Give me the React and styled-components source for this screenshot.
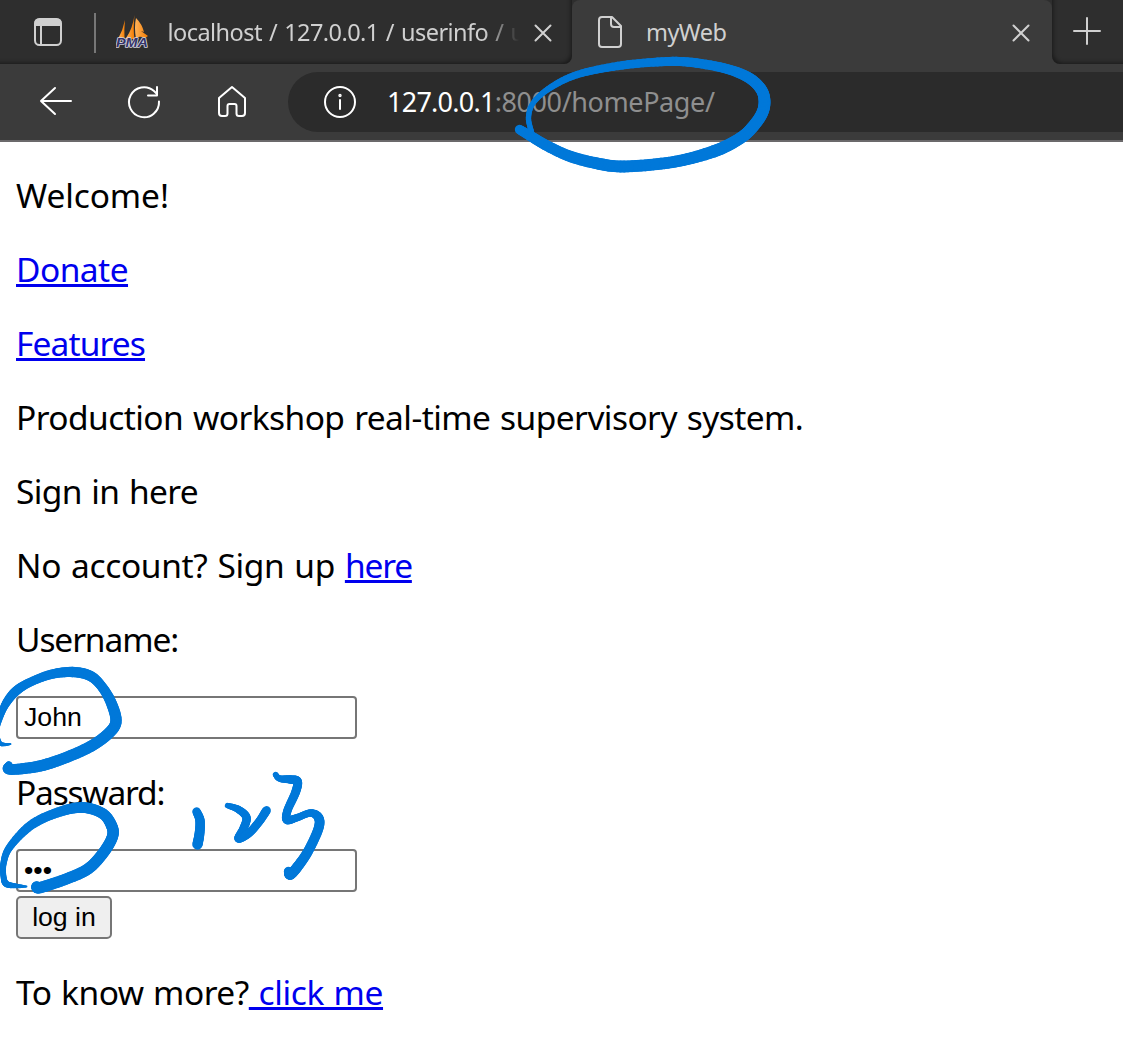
import React from "react";
import styled, { createGlobalStyle } from "styled-components";

const GlobalStyle = createGlobalStyle`
  * { box-sizing: border-box; }
  body { margin: 0; background: #fff; }
`;

const Screen = styled.div`
  position: relative;
  height: 1061px;
  overflow: hidden;
  color: #000;
  font-family: "Noto Sans", "Open Sans", sans-serif;
`;

/* ---------- browser chrome ---------- */
const TabStrip = styled.header`
  display: flex;
  height: 64px;
  background: linear-gradient(#2e2e2e 50%, #3b3b3b 50%);
`;

const InactiveArea = styled.div`
  display: flex;
  align-items: center;
  width: 572px;
  padding-left: 33px;
  background: #2e2e2e;
  border-bottom-right-radius: 8px;
  box-shadow: inset -3px -3px 4px -2px rgba(0, 0, 0, 0.45);
`;

const Divider = styled.span`
  width: 2px;
  height: 40px;
  margin: 1px 20px 0 31px;
  background: #777;
`;

const ActiveTab = styled.div`
  display: flex;
  align-items: center;
  width: 480px;
  padding-left: 25px;
  background: #3b3b3b;
  border-radius: 8px 8px 0 0;
`;

const NewTab = styled.div`
  display: flex;
  flex: 1;
  align-items: center;
  padding: 0 0 2px 21px;
  background: #2e2e2e;
  border-bottom-left-radius: 8px;
  box-shadow: inset 3px -3px 4px -2px rgba(0, 0, 0, 0.45);
`;

const TabTitle = styled.span`
  flex: none;
  width: ${(p) => p.$width}px;
  margin-left: ${(p) => p.$gap}px;
  color: #d0d0d0;
  font-size: 23.5px;
  line-height: 32px;
  letter-spacing: -0.55px;
  word-spacing: 1.5px;
  white-space: nowrap;
  ${(p) => p.$fade && "mask-image: linear-gradient(to right, #000 316px, transparent 351px);"}
`;

const Toolbar = styled.nav`
  display: flex;
  align-items: center;
  height: 78px;
  padding-left: 38px;
  background: #3b3b3b;
  border-bottom: 2px solid #6b696b;
`;

const ToolIcons = styled.div`
  display: flex;
  gap: 52px;
  width: 250px;
`;

const AddressBar = styled.div`
  display: flex;
  flex: 1;
  align-items: center;
  height: 60px;
  padding-left: 34px;
  background: #2b2b2b;
  border-radius: 30px 0 0 30px;
  color: #8f8f8f;
  font-size: 27px;
  line-height: 40px;
  letter-spacing: -0.4px;
`;

const Host = styled.span`
  margin-left: 29px;
  color: #fff;
  letter-spacing: -0.75px;
`;

const Glyph = styled.svg`
  display: block;
  flex: none;
  fill: none;
  stroke: ${(p) => p.$tone || "#fff"};
  stroke-width: 2;
  stroke-linecap: round;
  stroke-linejoin: round;
`;

const CloseGlyph = styled(Glyph)`
  margin: 2px 0 0 ${(p) => p.$gap}px;
`;

const LogoText = styled.text`
  font: italic bold 13.5px "Liberation Sans", sans-serif;
  fill: #34346a;
  stroke: #d5d5df;
  stroke-width: 1.6px;
  paint-order: stroke;
`;

/* ---------- page ---------- */
const Page = styled.main`
  display: flex;
  flex-direction: column;
  gap: 32px;
  padding: 32px 16px;
`;

const Paragraph = styled.p`
  margin: 0;
  font-size: 33.5px;
  line-height: 42px;
  letter-spacing: ${(p) => p.$track || 0}px;
  word-spacing: ${(p) => p.$space || 0}px;
  white-space: pre;
`;

const Link = styled.a`
  color: #0000ee;
  letter-spacing: ${(p) => p.$track}px;
  text-decoration: underline;
  text-decoration-thickness: 3px;
  text-underline-offset: 2px;
`;

const Form = styled.form`
  display: flex;
  flex-direction: column;
  align-items: flex-start;
`;

const Field = styled.input`
  width: 341px;
  height: 43px;
  margin: ${(p) => p.$above}px 0 ${(p) => p.$below}px;
  padding: 0 6px 1px;
  border: 2px solid #767676;
  border-radius: 4px;
  background: #fff;
  color: #000;
  outline: none;
  font: 26.67px "Liberation Sans", Arial, sans-serif;
`;

const Submit = styled.button`
  width: 96px;
  height: 43px;
  padding: 0 0 1px;
  border: 2px solid #767676;
  border-radius: 5px;
  background: #efefef;
  color: #000;
  font: 26.67px "Liberation Sans", Arial, sans-serif;
`;

/* ---------- handwritten ink over the page ---------- */
const InkLayer = styled.svg`
  position: absolute;
  inset: 0;
  pointer-events: none;
  stroke: #0078d9;
  stroke-linecap: round;
`;

// each stroke is a list of [x, y, pen width]
const strokes = [
  [[531,131.5,5],[528,117,5],[533,102,5],[550,87,6],[577,74,7],[617,65.5,8],[657,61.5,8.5],[687,61.5,9],[723,67.5,9.5],[747,76.5,10.5],[760,88,11],[764,100,11.5],[761.5,113,11.5],[751.7,127,11.5],[740,137.5,11.5],[717,149.5,12],[683,159.5,11.5],[653,164,11.5],[620,166,11.5],[597,163,11.5],[570,156,11],[547,145.5,10.5],[530,135.5,10],[519,129,9]],
  [[10,743.5,1.5],[4,744,3],[-1,742,4],[-4,730,5],[1,713,6],[6,702,8],[15,691,9],[28,682.5,8.5],[50,674,9],[72,671.5,10],[90,675.5,10],[102,687,9.5],[111,703,10.5],[115.5,721,11],[108,733,11],[90,746,11],[63,758,11],[37,766,11],[9,769,10],[8.5,764,6]],
  [[26,886,1.5],[17,885.5,4],[6,883.5,6],[3,876,5.5],[3,863,6],[9,847,7],[30,825,9],[57,812,9.5],[82,807,10.5],[102,813,10.5],[111,825,11],[112,836,11],[103,852,11],[88,868,11],[67,878,11],[40,887,11],[36,886,10]],
  [[196,811,8],[199.5,820,9],[199,833,9.5],[197,844,10]],
  [[227,805,5],[238,809,7],[246,817,8],[243,828,8],[238,838,8],[248,833,8],[258,822,8],[266,810,8.5]],
  [[275,774,5],[279,778,6],[290,779,8],[297,781,8.5],[295,792,8.5],[287,810,8],[286.5,819.5,8],[297,817,7],[310,812.5,7],[318,817,9],[318,828,9.5],[308,850,9.5],[298,865,10],[290,874,10],[288,871,9]],
];

const curve = (a, b, c, d, t) =>
  0.5 * (2 * b + (c - a) * t + (2 * a - 5 * b + 4 * c - d) * t * t + (3 * b - a - 3 * c + d) * t * t * t);

const samplePen = (pts) => {
  const out = [];
  for (let i = 0; i < pts.length - 1; i++) {
    const a = pts[Math.max(i - 1, 0)];
    const d = pts[Math.min(i + 2, pts.length - 1)];
    for (let s = 0; s < 8; s++) {
      out.push([0, 1, 2].map((k) => curve(a[k], pts[i][k], pts[i + 1][k], d[k], s / 8)));
    }
  }
  out.push(pts[pts.length - 1]);
  return out;
};

function Ink() {
  return (
    <InkLayer width="1123" height="1061" viewBox="-0.5 -0.5 1123 1061" aria-hidden="true">
      {strokes.map((pts, n) => {
        const pen = samplePen(pts);
        return (
          <g key={n}>
            {pen.slice(1).map((p, i) => (
              <line key={i} x1={pen[i][0]} y1={pen[i][1]} x2={p[0]} y2={p[1]} strokeWidth={(p[2] + pen[i][2]) / 2 + 0.3} />
            ))}
          </g>
        );
      })}
    </InkLayer>
  );
}

const CloseIcon = ({ gap }) => (
  <CloseGlyph $tone="#d0d0d0" $gap={gap} width="18" height="18" viewBox="0 0 18 18">
    <path d="M1.5 1.5l15 15M16.5 1.5l-15 15" />
  </CloseGlyph>
);

const PmaLogo = () => (
  <Glyph width="34" height="34" viewBox="0 0 34 34">
    <defs>
      <linearGradient id="sail" x1="0" x2="1">
        <stop offset="0" stopColor="#ffb45c" />
        <stop offset="1" stopColor="#f47b00" />
      </linearGradient>
    </defs>
    <g fill="url(#sail)" stroke="none">
      <path d="M9 5Q8 14 8.500 24H2Q7 15 9 5z" />
      <path d="M18.500 0Q17 14 18.500 24H9.500Q17 13 18.500 0z" />
      <path d="M20 3Q26 9 28 17L25 16L32 21L29 23Q22 20 20 24Q18 12 20 3z" />
    </g>
    <LogoText x="0" y="31.5" textLength="32" lengthAdjust="spacingAndGlyphs">PMA</LogoText>
  </Glyph>
);

export default function App() {
  return (
    <>
      <GlobalStyle />
      <Screen>
        <TabStrip>
          <InactiveArea>
            <Glyph $tone="#d0d0d0" width="30" height="30" viewBox="0 0 30 30">
              <rect x="2" y="2" width="26" height="26" rx="4.5" />
              <path d="M1.5 9V6Q1.5 1.5 6 1.5H24Q28.500 1.5 28.500 6V9z" fill="#d0d0d0" stroke="none" />
              <path d="M8 8v20" />
            </Glyph>
            <Divider />
            <PmaLogo />
            <TabTitle $width={366} $gap={17.5} $fade>localhost / 127.0.0.1 / userinfo / u</TabTitle>
            <CloseIcon gap={0.5} />
          </InactiveArea>
          <ActiveTab>
            <Glyph $tone="#d0d0d0" width="26" height="34" viewBox="0 0 26 34">
              <path d="M5 2H15L24 11V29Q24 32 21 32H5Q2 32 2 29V5Q2 2 5 2z" />
              <path d="M14 2V9Q14 12 17 12H24" />
            </Glyph>
            <TabTitle $width={84} $gap={23}>myWeb</TabTitle>
            <CloseIcon gap={282} />
          </ActiveTab>
          <NewTab>
            <Glyph $tone="#d0d0d0" width="28" height="28" viewBox="0 0 28 28">
              <path d="M14 1v26M1 14h26" />
            </Glyph>
          </NewTab>
        </TabStrip>
        <Toolbar>
          <ToolIcons>
            <Glyph width="36" height="36" viewBox="0 0 36 36">
              <path d="M33 17H3M17 4L3 17l14 13" />
            </Glyph>
            <Glyph width="36" height="36" viewBox="0 0 36 36">
              <path d="M33 17.5A15 15 0 1 1 28 7L31 10M31 3V11.500H22" />
            </Glyph>
            <Glyph width="36" height="36" viewBox="0 0 36 36">
              <path d="M18 3L31 14V29Q31 32 28 32H25Q22.500 32 22.500 29.500V22Q22.500 20 20.500 20H15.500Q13.500 20 13.500 22V29.500Q13.500 32 11 32H8Q5 32 5 29V14z" />
            </Glyph>
          </ToolIcons>
          <AddressBar>
            <Glyph width="36" height="36" viewBox="0 0 36 36">
              <circle cx="18" cy="18" r="15" />
              <path d="M18 16v9" />
              <circle cx="18" cy="11.500" r="0.7" />
            </Glyph>
            <Host>127.0.0.1</Host>
            <span>:8000/homePage/</span>
          </AddressBar>
        </Toolbar>
        <Page>
          <Paragraph $track={-0.1}>Welcome!</Paragraph>
          <Paragraph><Link $track={-0.53}>Donate</Link></Paragraph>
          <Paragraph><Link $track={-0.87}>Features</Link></Paragraph>
          <Paragraph $track={-0.56} $space={1.6}>Production workshop real-time supervisory system.</Paragraph>
          <Paragraph $track={-0.65} $space={1.5}>Sign in here</Paragraph>
          <Paragraph $track={-0.33} $space={1.5}>No account? Sign up <Link $track={-1.17}>here</Link></Paragraph>
          <Paragraph $track={-1.1}>Username:</Paragraph>
          <Form onSubmit={(e) => e.preventDefault()}>
            <Field type="text" defaultValue="John" $above={4} $below={32} />
            <Paragraph $track={-1.2}>Passward:</Paragraph>
            <Field type="password" defaultValue="123" $above={36} $below={4} />
            <Submit type="submit">log in</Submit>
          </Form>
          <Paragraph $track={-0.5} $space={1.3}>To know more?<Link $track={-0.37}> click me</Link></Paragraph>
        </Page>
        <Ink />
      </Screen>
    </>
  );
}
